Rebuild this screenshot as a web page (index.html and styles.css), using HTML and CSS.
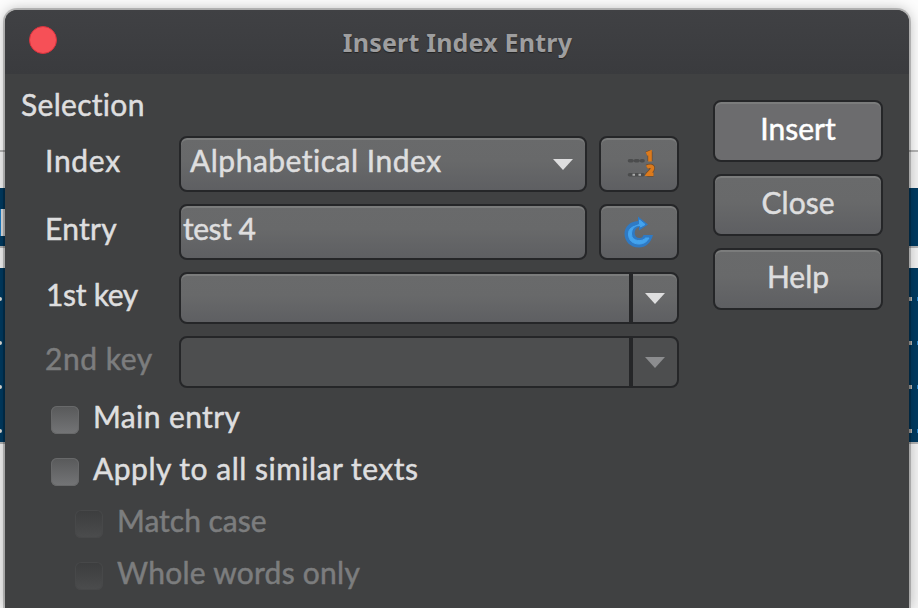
FILE: index.html
```html
<!DOCTYPE html>
<html lang="en">
<head>
<meta charset="utf-8">
<title>Insert Index Entry</title>
<link rel="stylesheet" href="styles.css">
</head>
<body>
<div class="desktop">
  <div class="strip strip-top"></div>
  <div class="strip strip-toolbar"></div>
  <div class="strip strip-header"><i class="caret"></i></div>
  <div class="strip strip-gap"></div>
  <div class="strip strip-table">
    <div class="dots"><i></i><i></i></div>
    <div class="dots"><i></i><i></i></div>
    <div class="dots"><i></i><i></i></div>
    <div class="dots"><i></i><i></i></div>
  </div>
  <div class="strip strip-rest"></div>
</div>
<main class="dialog">
  <header class="titlebar"><button class="close-dot" aria-label="Close"></button><h1>Insert Index Entry</h1></header>
  <div class="content">
    <section class="selection">
      <h2>Selection</h2>
      <div class="row">
        <label class="t-index">Index</label>
        <div class="box select"><span class="t-alpha">Alphabetical Index</span>
          <svg class="arrow" width="20" height="11" viewBox="0 0 20 11"><path d="M0 0H20L10 11Z"/></svg></div>
        <button class="box icon">
          <svg width="32" height="32" viewBox="0 0 32 32">
            <path d="M6.500 12.700h2.500M12.500 12.700h2.500M18.500 12.700h1.500M6.500 26.700H20" stroke="#4b4c4d" stroke-width="3.600" stroke-linecap="round"/>
            <path d="M9.500 26.700h2.500m3.500 0h2.500" stroke="#aaabab" stroke-width="2"/>
            <g fill="none" stroke="#6d4b2d" stroke-width="5" stroke-linejoin="round"><path d="M23.500 6L27 4.500V13"/><path d="M24 19C26.500 17.500 29.500 18 29.500 20.300C29.500 22.500 26.500 24 25 26.200H30.500"/></g>
            <g fill="none" stroke="#dc7a1c" stroke-width="3.600"><path d="M23.500 6L27 4.500V13.500"/><path d="M24 19.300C26.500 17.500 29.500 18 29.500 20.300C29.500 22.500 26.500 24 25 26.200H30.500"/></g>
          </svg></button>
      </div>
      <div class="row">
        <label class="t-entry">Entry</label>
        <div class="box field"><span class="t-test">test 4</span></div>
        <button class="box icon">
          <svg width="32" height="32" viewBox="0 0 32 32">
            <path d="M15 .500L25 8.500L16 14.500V11C10.500 12 10 21.500 16 22C19 22.500 20 20.500 20.500 19H30C28 27 22.500 31.500 16 31.500C7 31.500 1.500 25 1.500 18C1.500 10.500 7 5.500 15 5Z" fill="#2f7ac4"/>
            <path d="M16.500 4L22 8.500L17.500 11V9.500C9 9.500 5.500 13 5.500 18C5.500 24.500 10 28 16 28C21 28 24 25.500 26 22H22.500C20 26 8.500 26 8.500 18C8.500 12.500 12 9.500 16.500 8.500Z" fill="#43a3ee" stroke="#43a3ee"/>
          </svg></button>
      </div>
      <div class="row short">
        <label class="t-first">1st key</label>
        <div class="box combo"><span class="drop"><svg class="arrow" width="20" height="11" viewBox="0 0 20 11"><path d="M0 0H20L10 11Z"/></svg></span></div>
      </div>
      <div class="row short disabled">
        <label class="t-second">2nd key</label>
        <div class="box combo"><span class="drop"><svg class="arrow" width="20" height="11" viewBox="0 0 20 11"><path d="M0 0H20L10 11Z"/></svg></span></div>
      </div>
      <div class="checks">
        <label class="check"><i></i><span class="t-main">Main entry</span></label>
        <label class="check"><i></i><span class="t-apply">Apply to all similar texts</span></label>
        <label class="check sub disabled"><i></i><span>Match case</span></label>
        <label class="check sub disabled"><i></i><span class="t-whole">Whole words only</span></label>
      </div>
    </section>
    <aside class="actions">
      <button class="box primary"><span>Insert</span></button>
      <button class="box"><span>Close</span></button>
      <button class="box"><span>Help</span></button>
    </aside>
  </div>
</main>
</body>
</html>
```
FILE: styles.css
```css
* { box-sizing: border-box; }
body { margin: 0; width: 918px; height: 608px; overflow: hidden; position: relative; background: #fff; font: 30px/36px Lato, "Open Sans", sans-serif; color: #dededf; font-variant-ligatures: none; -webkit-text-stroke: .5px currentColor; }
h1, h2 { margin: 0; font: inherit; }
button { font: inherit; color: inherit; }
svg { display: block; flex: none; }

.desktop { height: 608px; display: flex; flex-direction: column; }
.strip { flex: none; display: flex; }
.strip-top { height: 150px; background: #fcfcfc; }
.strip-toolbar { height: 38px; border-top: 2px solid #b5b5b5; background: #f3f3f3; }
.strip-header { height: 58px; background: #003a60; padding-top: 21px; }
.caret { width: 5px; height: 27px; border-left: 1px solid #1a7cc4; background: #ddd; }
.strip-gap { height: 22px; border-top: 2px solid #b5b5b5; background: #f3f3f3; }
.strip-table { height: 174px; background: #003a60; flex-direction: column; gap: 40px; padding-top: 29px; }
.dots { display: flex; justify-content: space-between; height: 4px; }
.dots i { width: 2px; background: #e2ded8; border-radius: 0 2px 2px 0; }
.dots i:last-child { width: 9px; border-left: 3px solid #b9b6b2; border-right: 1px solid #2c86cc; border-radius: 0; background: none; }
.strip-rest { height: 166px; border-top: 2px solid #b5b5b5; background: #f3f3f3; }

.dialog { position: absolute; left: 5px; top: 10px; width: 904px; height: 598px; background: #404142; border-radius: 12px 12px 0 0; box-shadow: 0 0 0 2px rgba(0,0,0,.2), 0 0 14px rgba(0,0,0,.3); }
.titlebar { height: 64px; border-radius: 12px 12px 0 0; background: linear-gradient(#404144, #3a3b3e); display: flex; align-items: center; }
.close-dot { margin: -4px 0 0 24px; padding: 0; width: 28px; height: 28px; border-radius: 50%; border: 1px solid #d9323d; background: #f65057; }
h1 { flex: 1; padding-right: 51px; text-align: center; font: bold 25px/62px "Noto Sans", sans-serif; letter-spacing: .2px; color: #9e9e9f; text-shadow: 0 1px 1px #222; -webkit-text-stroke: 0; }

.content { display: flex; justify-content: space-between; padding-right: 26px; }
.selection { width: 674px; }
h2 { height: 62px; line-height: 61px; padding-left: 16px; letter-spacing: .3px; }
.row { display: grid; grid-template-columns: 134px 408px 80px; height: 56px; margin: 0 0 12px 40px; line-height: 49px; }
.row .icon { margin-left: 12px; width: 80px; }
.row.short { height: 52px; line-height: 45px; grid-template-columns: 134px 500px; }
.box { border: 2px solid #252628; border-radius: 8px; background: linear-gradient(#696a6b, #68696a 45%, #5e5f62); box-shadow: inset 0 2px #7b7c7c; padding: 0; display: flex; white-space: nowrap; }
.select { justify-content: space-between; padding: 0 12px 0 8px; line-height: 45px; }
.field { padding-left: 2px; line-height: 45px; }
.arrow { fill: #dededf; }
.select .arrow { margin-top: 21px; }
.icon { align-items: center; justify-content: center; }
.combo { justify-content: flex-end; }
.drop { width: 48px; border-left: 4px solid #252628; padding: 19px 0 0 12px; }
.disabled { color: #7c7d7e; }
.disabled .box { background: #4d4e4f; box-shadow: none; }
.disabled .arrow { fill: #8c8d8f; }

.t-index { letter-spacing: .7px; }
.t-alpha { padding-left: 1px; letter-spacing: .5px; }
.t-entry { letter-spacing: .3px; }
.t-test { letter-spacing: -.5px; }
.t-first { padding-left: 1px; letter-spacing: -.3px; }
.t-second { letter-spacing: .55px; }
.t-main { letter-spacing: .4px; }
.t-apply { letter-spacing: .5px; }
.t-whole { letter-spacing: .25px; }

.checks { margin-top: -6px; }
.check { display: flex; height: 52px; line-height: 45px; padding-left: 46px; gap: 14px; }
.check.sub { padding-left: 70px; }
.check i { width: 28px; height: 28px; margin-top: 12px; border-radius: 6px; background: linear-gradient(#58595a, #747577); box-shadow: inset 0 0 0 1px #68696a; }
.check.disabled i { background: linear-gradient(#3c3d3e, #4b4c4d); box-shadow: inset 0 0 0 1px #474849; }

.actions { width: 170px; padding-top: 26px; display: flex; flex-direction: column; gap: 12px; }
.actions .box { height: 62px; justify-content: center; align-items: flex-start; line-height: 53px; }
.actions .primary { background: #6c6c6e; color: #fff; }
```
